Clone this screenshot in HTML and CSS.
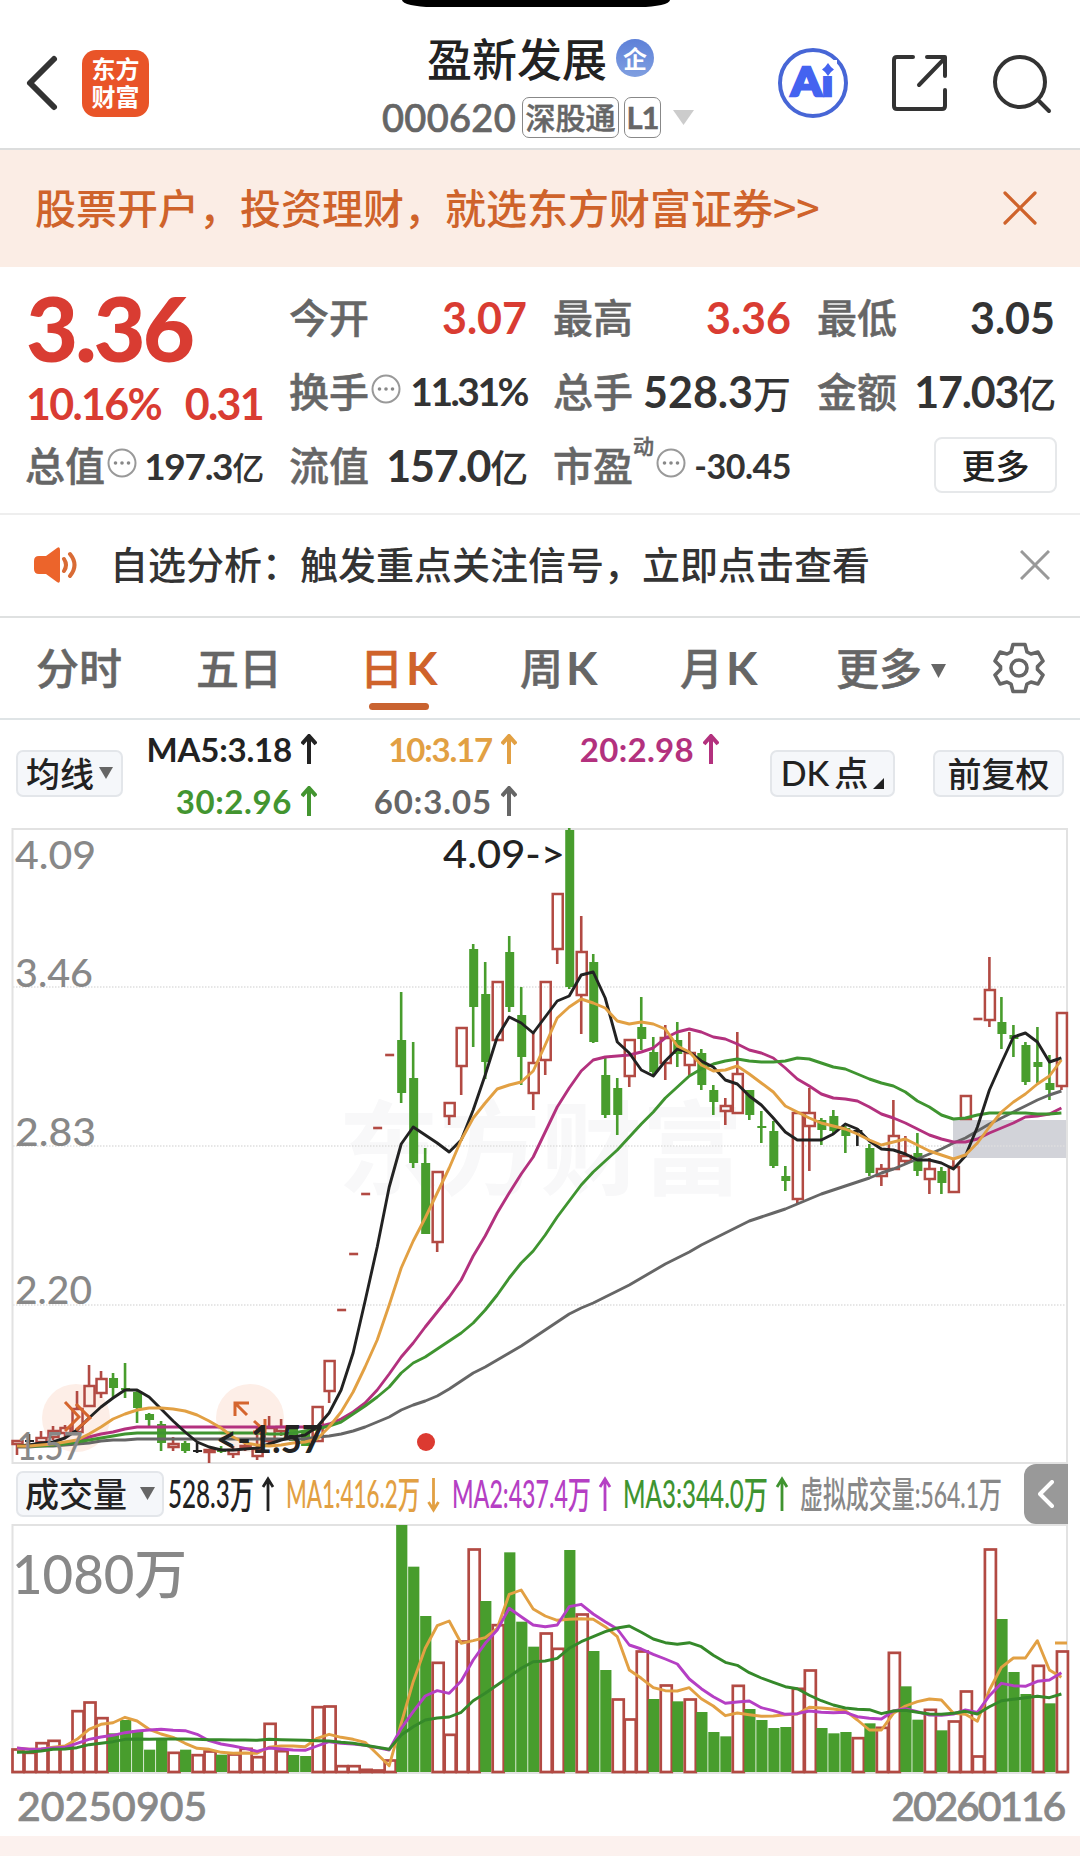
FILE: index.html
```html
<!DOCTYPE html>
<html lang="zh-CN">
<head>
<meta charset="UTF-8">
<meta name="viewport" content="width=device-width, initial-scale=1.0">
<title>盈新发展 000620</title>
<link rel="stylesheet" href="styles.css">
</head>
<body>

  <svg class="defs" width="0" height="0">
    <symbol id="up" viewBox="0 0 16 30"><path d="M8 30V2M1 10L8 2L15 10" fill="none" stroke="currentColor" stroke-width="4"/></symbol>
    <symbol id="dots" viewBox="0 0 30 30">
      <circle cx="15" cy="15" r="13.500" fill="none" stroke="#999" stroke-width="2"/>
      <circle cx="8.500" cy="15" r="1.800" fill="#888"/><circle cx="15" cy="15" r="1.800" fill="#888"/><circle cx="21.500" cy="15" r="1.800" fill="#888"/>
    </symbol>
  </svg>

  <div class="notch"></div>

  <header class="header">
    <svg class="back" width="34" height="58" viewBox="0 0 34 58"><path d="M29 5L5 29L29 53" fill="none" stroke="#333" stroke-width="6" stroke-linecap="round" stroke-linejoin="round"/></svg>
    <div class="logo">东方<br>财富</div>
    <div class="stock">
      <div class="stock-name">盈新发展<span class="badge">企</span></div>
      <div class="stock-code">
        <span class="code">000620</span>
        <span class="tag">深股通</span>
        <span class="tag tag-l1">L1</span>
        <svg width="21" height="15" viewBox="0 0 21 15"><path d="M0 0H21L10.500 15Z" fill="#ccc"/></svg>
      </div>
    </div>
    <div class="actions">
      <svg width="70" height="70" viewBox="0 0 70 70">
        <circle cx="35" cy="35" r="33" fill="#fff" stroke="#4766d6" stroke-width="4"/>
        <text class="ai-text" x="13" y="48" textLength="42" lengthAdjust="spacingAndGlyphs">Ai</text>
        <rect x="42" y="12" width="17" height="16" fill="#fff"/>
        <path d="M50 15L53 19L56 21.500L53 24L50 28L47 24L44 21.500L47 19Z" fill="#4463f0"/>
      </svg>
      <svg width="58" height="58" viewBox="0 0 58 58" fill="none" stroke="#333" stroke-width="4" stroke-linecap="round" stroke-linejoin="round">
        <path d="M22 3H6Q3 3 3 6V52Q3 55 6 55H51Q54 55 54 52V36"/>
        <path d="M36 3H54V22M54 4L28 31"/>
      </svg>
      <svg width="60" height="60" viewBox="0 0 60 60" fill="none" stroke="#333" stroke-width="4" stroke-linecap="round">
        <circle cx="28" cy="28" r="25"/><path d="M46 46L57 57"/>
      </svg>
    </div>
  </header>

  <div class="banner">
    <span>股票开户，投资理财，就选东方财富证券&gt;&gt;</span>
    <svg width="34" height="34" viewBox="0 0 34 34"><path d="M2 2L32 32M32 2L2 32" stroke="#cf632b" stroke-width="3.200" stroke-linecap="round"/></svg>
  </div>

  <section class="quote">
    <div class="price up-color">
      <div class="price-now">3.36</div>
      <div class="price-change"><span>10.16%</span><span>0.31</span></div>
    </div>
    <div class="cell"><span class="label">今开</span><b class="up-color">3.07</b></div>
    <div class="cell"><span class="label">最高</span><b class="up-color">3.36</b></div>
    <div class="cell"><span class="label">最低</span><b>3.05</b></div>
    <div class="cell"><span class="label">换手<svg class="info"><use href="#dots"/></svg></span><b class="mid">11.31%</b></div>
    <div class="cell"><span class="label">总手</span><b>528.3<i>万</i></b></div>
    <div class="cell"><span class="label">金额</span><b class="tight">17.03<i>亿</i></b></div>
    <div class="cell"><span class="label">总值<svg class="info"><use href="#dots"/></svg></span><b class="small">197.3<i>亿</i></b></div>
    <div class="cell"><span class="label">流值</span><b class="tight">157.0<i>亿</i></b></div>
    <div class="cell"><span class="label">市盈<sup>动</sup><svg class="info"><use href="#dots"/></svg></span><b class="tiny">-30.45</b></div>
    <div class="cell cell-more"><button class="more">更多</button></div>
  </section>

  <div class="notice">
    <svg width="44" height="38" viewBox="0 0 44 38">
      <path d="M5 10H12L23 2Q26 0 26 4V34Q26 38 23 36L12 28H5Q0 28 0 23V15Q0 10 5 10Z" fill="#ec642b"/>
      <path d="M30 13Q34 19 30 25M36 8Q45 19 36 30" fill="none" stroke="#d96b35" stroke-width="4" stroke-linecap="round"/>
    </svg>
    <span>自选分析：触发重点关注信号，立即点击查看</span>
    <svg width="30" height="30" viewBox="0 0 30 30"><path d="M1 1L29 29M29 1L1 29" stroke="#999" stroke-width="3"/></svg>
  </div>

  <nav class="tabs">
    <span>分时</span>
    <span>五日</span>
    <span class="active">日<em>K</em></span>
    <span>周<em>K</em></span>
    <span>月<em>K</em></span>
    <span>更多<svg class="caret" width="15" height="14" viewBox="0 0 15 14"><path d="M0 0H15L7.500 14Z" fill="#666"/></svg></span>
    <svg width="52" height="52" viewBox="-26 -26 52 52" fill="none" stroke="#666" stroke-width="3.600" stroke-linejoin="round">
      <path d="M-6 -23.500H6L8 -16L12 -14L19 -16L24 -7L18.500 -1.500V1.500L24 7L19 16L12 14L8 16L6 23.500H-6L-8 16L-12 14L-19 16L-24 7L-18.500 1.500V-1.500L-24 -7L-19 -16L-12 -14L-8 -16Z"/>
      <circle r="8"/>
    </svg>
  </nav>

  <div class="ma-bar">
    <button class="chip">均线<svg width="14" height="12" viewBox="0 0 14 12"><path d="M0 0H14L7 12Z" fill="#666"/></svg></button>
    <div class="ma-values">
      <span class="ma5">MA5:3.18<svg class="arrow"><use href="#up"/></svg></span>
      <span class="ma10">10:3.17<svg class="arrow"><use href="#up"/></svg></span>
      <span class="ma20">20:2.98<svg class="arrow"><use href="#up"/></svg></span>
      <span class="ma30">30:2.96<svg class="arrow"><use href="#up"/></svg></span>
      <span class="ma60">60:3.05<svg class="arrow"><use href="#up"/></svg></span>
    </div>
    <button class="chip chip-dk">DK<span>点</span><svg width="11" height="11" viewBox="0 0 11 11"><path d="M11 0V11H0Z" fill="#222"/></svg></button>
    <button class="chip chip-fq">前复权</button>
  </div>

  <svg class="chart" id="priceChart" width="1080" height="636" viewBox="0 828 1080 636"></svg>

  <div class="vol-bar">
    <button class="chip">成交量<svg width="15" height="13" viewBox="0 0 15 13"><path d="M0 0H15L7.500 13Z" fill="#666"/></svg></button>
    <svg class="vol-values" width="845" height="60" viewBox="165 1464 845 60">
      <text x="168" y="1508" textLength="86" lengthAdjust="spacingAndGlyphs" fill="#222">528.3万</text>
      <text x="286" y="1508" textLength="134" lengthAdjust="spacingAndGlyphs" fill="#e2a043">MA1:416.2万</text>
      <text x="452" y="1508" textLength="139" lengthAdjust="spacingAndGlyphs" fill="#b53fc4">MA2:437.4万</text>
      <text x="623" y="1508" textLength="145" lengthAdjust="spacingAndGlyphs" fill="#3f9430">MA3:344.0万</text>
      <text class="virtual" x="800" y="1508" textLength="202" lengthAdjust="spacingAndGlyphs" fill="#888">虚拟成交量:564.1万</text>
      <g fill="none" stroke-width="2.800">
        <path d="M268 1511V1480M263 1487L268 1479L273 1487" stroke="#222"/>
        <path d="M433.500 1478V1510M428.500 1502L433.500 1510L438.500 1502" stroke="#e2a043"/>
        <path d="M605 1511V1480M600 1487L605 1479L610 1487" stroke="#b53fc4"/>
        <path d="M782 1511V1480M777 1487L782 1479L787 1487" stroke="#3f9430"/>
      </g>
    </svg>
    <button class="collapse"><svg width="16" height="28" viewBox="0 0 16 28"><path d="M14 2L2 14L14 26" fill="none" stroke="#fff" stroke-width="4" stroke-linecap="round" stroke-linejoin="round"/></svg></button>
  </div>

  <svg class="chart" id="volumeChart" width="1080" height="250" viewBox="0 1524 1080 250"></svg>

  <div class="dates"><span>20250905</span><span class="date-end">20260116</span></div>
  <div class="bottom-strip"></div>

  <script src="chart.js"></script>
</body>
</html>
```

FILE: styles.css
```css
body {
  margin: 0;
  width: 1080px;
  height: 1856px;
  overflow: hidden;
  background-color: #fff;
  color: #333;
  font-family: Lato, 'Noto Sans CJK SC', sans-serif;
  font-weight: 500;
}

svg {
  display: block;
  flex: none;
}

button {
  font: inherit;
  color: #222;
  padding: 0;
  margin: 0;
}

.defs {
  position: absolute;
}

.notch {
  position: absolute;
  top: 0;
  left: 402px;
  width: 268px;
  height: 7px;
  background-color: #000;
  border-radius: 0 0 30px 30px / 0 0 7px 7px;
}

/* header */
.header {
  box-sizing: border-box;
  height: 150px;
  border-bottom: 2px solid #dcdddd;
  display: grid;
  grid-template-columns: 57px 67px 1fr 275px;
  padding: 0 28px 0 25px;
}

.back {
  margin-top: 54px;
}

.logo {
  width: 67px;
  height: 67px;
  margin-top: 50px;
  border-radius: 14px;
  background-color: #e95428;
  color: #fff;
  font: 700 24px/28px 'Noto Sans CJK SC', sans-serif;
  text-align: center;
  padding-top: 4px;
  box-sizing: border-box;
}

.stock {
  padding-top: 33px;
  padding-left: 233px;
}

.stock-name {
  display: flex;
  align-items: center;
  height: 50px;
  margin-left: 45px;
  font: 500 45px/50px 'Noto Sans CJK SC', sans-serif;
  color: #222;
  white-space: nowrap;
}

.badge {
  width: 38px;
  height: 38px;
  margin-left: 9px;
  border-radius: 50%;
  background: linear-gradient(#5d80d8, #809fe0);
  color: #fff;
  font: 700 24px/37px 'Noto Sans CJK SC', sans-serif;
  text-align: center;
}

.stock-code {
  display: flex;
  align-items: center;
  height: 42px;
  margin-top: 13px;
  color: #666;
}

.code {
  font-size: 38px;
  width: 140px;
  flex: none;
  letter-spacing: 0.3px;
  -webkit-text-stroke: 0.7px #666;
}

.tag {
  box-sizing: border-box;
  flex: none;
  width: 97px;
  height: 41px;
  border: 1.5px solid #888;
  border-radius: 7px;
  font: 500 30px/36px 'Noto Sans CJK SC', sans-serif;
  text-align: center;
  -webkit-text-stroke: 0.5px #666;
}

.tag-l1 {
  width: 37px;
  margin: 0 12px 0 5px;
  font: 700 31px/38px Lato, sans-serif;
  letter-spacing: -1px;
}

.actions {
  display: flex;
  align-items: flex-start;
  justify-content: space-between;
  padding-top: 48px;
  padding-left: 1px;
}

.actions svg + svg {
  margin-top: 6px;
}

.ai-text {
  font: 900 39px Lato, sans-serif;
  fill: #4463f0;
  stroke: #4463f0;
  stroke-width: 2.5px;
}

/* ad banner */
.banner {
  height: 117px;
  box-sizing: border-box;
  display: flex;
  align-items: center;
  justify-content: space-between;
  padding: 0 43px 2px 35px;
  background-color: #fbede5;
  color: #cf632b;
  font: 500 41px/60px 'Noto Sans CJK SC', sans-serif;
}

.banner span {
  margin-top: -4px;
}

/* quote */
.quote {
  box-sizing: border-box;
  height: 248px;
  display: grid;
  grid-template-columns: repeat(4, 237px);
  grid-template-rows: repeat(3, 74px);
  column-gap: 27px;
  padding: 13px 0 0 26px;
  border-bottom: 2px solid #eee;
}

.up-color {
  color: #d93c32;
}

.price {
  grid-row: span 2;
}

.price-now {
  margin-top: -2px;
  font-size: 90px;
  font-weight: 900;
  line-height: 99px;
  letter-spacing: -3px;
}

.price-change {
  display: flex;
  justify-content: space-between;
  font-size: 43px;
  font-weight: 700;
  line-height: 54px;
  letter-spacing: -1.7px;
}

.cell {
  display: flex;
  align-items: center;
  justify-content: space-between;
  white-space: nowrap;
}

.cell b {
  font-size: 43px;
  font-weight: 700;
}

.cell i {
  font: 500 38px 'Noto Sans CJK SC', sans-serif;
  line-height: 1;
}

.cell .tight {
  letter-spacing: -1.2px;
}

.cell .mid {
  font-size: 39px;
  letter-spacing: -2.5px;
}

.cell .small {
  font-size: 37px;
  letter-spacing: -1.3px;
}

.cell .small i {
  font-size: 32px;
}

.cell .tiny {
  font-size: 34px;
  letter-spacing: -0.5px;
}

.label {
  display: flex;
  align-items: center;
  margin: -3px 0 0 -1px;
  font: 500 40px/60px 'Noto Sans CJK SC', sans-serif;
  color: #666;
  -webkit-text-stroke: 0.5px #666;
}

.label sup {
  font-size: 21px;
  line-height: 20px;
  align-self: flex-start;
  padding-top: 1px;
}

.info {
  width: 30px;
  height: 30px;
  margin-left: 2px;
  margin-top: -2px;
}

.cell-more {
  justify-content: flex-end;
}

.more {
  box-sizing: border-box;
  width: 123px;
  height: 56px;
  margin-right: -2px;
  border: 2px solid #e6e8ea;
  border-radius: 8px;
  background-color: #fff;
  font: 500 34px/48px 'Noto Sans CJK SC', sans-serif;
}

/* signal notice */
.notice {
  box-sizing: border-box;
  height: 103px;
  display: flex;
  align-items: center;
  padding: 0 30px 2px 34px;
  border-bottom: 2px solid #dfe1e1;
  font: 500 38px/60px 'Noto Sans CJK SC', sans-serif;
}

.notice span {
  flex: 1;
  margin-top: -3px;
  padding-left: 32px;
}

/* period tabs */
.tabs {
  box-sizing: border-box;
  height: 102px;
  display: grid;
  grid-template-columns: 160px 164px 160px 160px 156px 157px 52px;
  align-items: center;
  padding-left: 36px;
  border-bottom: 2px solid #dfe4e6;
  color: #666;
  font: 500 43px/96px 'Noto Sans CJK SC', sans-serif;
  -webkit-text-stroke: 0.5px;
}

.tabs span {
  height: 100px;
}

.tabs em {
  margin-left: 3px;
  font: 700 46px Lato, sans-serif;
  -webkit-text-stroke: 0;
}

.tabs .active {
  position: relative;
  color: #cf632b;
}

.tabs .active::after {
  content: '';
  position: absolute;
  left: 9px;
  bottom: 8px;
  width: 60px;
  height: 7px;
  border-radius: 4px;
  background-color: #c96330;
}

.tabs .caret {
  display: inline-block;
  margin-left: 9px;
  vertical-align: 7px;
}

/* moving averages */
.ma-bar {
  height: 108px;
  display: flex;
  padding-left: 16px;
}

.chip {
  box-sizing: border-box;
  display: flex;
  align-items: center;
  justify-content: center;
  flex: none;
  width: 107px;
  height: 47px;
  margin-top: 30px;
  border: 2px solid #e3e6ea;
  border-radius: 7px;
  background-color: #f5f7fa;
  font: 500 34px/40px 'Noto Sans CJK SC', sans-serif;
  padding-bottom: 2px;
}

.chip svg {
  margin-left: 5px;
}

.ma-values {
  display: grid;
  grid-template-columns: 194px 200px 202px;
  grid-template-rows: 52px 52px;
  margin-top: 3px;
  width: 647px;
  font-size: 33px;
  font-weight: 700;
}

.ma-values span {
  display: flex;
  align-items: center;
  justify-content: flex-end;
}

.arrow {
  width: 16px;
  height: 30px;
  margin-left: 9px;
}

.ma5 { color: #222; letter-spacing: -0.2px; }
.ma10 { color: #e2a043; letter-spacing: -1.2px; }
.ma20 { color: #b3317e; letter-spacing: 0.3px; }
.ma30 { color: #439530; letter-spacing: 0.6px; }
.ma60 { color: #666; letter-spacing: 0.9px; }

.chip-dk {
  width: 125px;
  font-family: Lato, 'Noto Sans CJK SC', sans-serif;
}

.chip-dk span {
  margin-left: 5px;
}

.chip-dk svg {
  align-self: flex-end;
  margin-bottom: 4px;
}

.chip-fq {
  width: 131px;
  margin-left: 38px;
}

/* charts */
.axis {
  fill: #888;
}

.mark {
  fill: #222;
}

.axis, .mark {
  stroke: currentColor;
  stroke-width: 0;
}

.watermark {
  font: 700 102px 'Noto Sans CJK SC', sans-serif;
  fill: #f8f8f9;
}

.vol-bar {
  height: 60px;
  display: flex;
  align-items: center;
  padding-left: 16px;
}

.vol-bar .chip {
  width: 148px;
  height: 46px;
  margin: 0 1px 0 0;
}

.vol-bar .chip svg {
  margin-left: 13px;
}

.vol-values {
  font-size: 38px;
  font-weight: 500;
}

.virtual {
  font-size: 36px;
}

.collapse {
  width: 44px;
  height: 60px;
  margin-left: 14px;
  border: 0;
  border-radius: 12px 0 0 12px;
  background-color: #999;
  display: flex;
  align-items: center;
  justify-content: center;
}

.dates {
  height: 62px;
  display: flex;
  align-items: center;
  justify-content: space-between;
  padding: 0 16px 0 17px;
  color: #888;
  font-size: 41px;
  -webkit-text-stroke: 0.7px #888;
}

.date-end {
  letter-spacing: -2.2px;
}

.bottom-strip {
  height: 20px;
  background-color: #fcf1ee;
}
```

FILE: chart.js
```js
const RED = '#b24a43';
const GREEN = '#489d2d';
const STEP = 12.005;
const LEFT = 17;
const cx = i => LEFT + STEP * i;

// [kind, high, body top, body bottom, low]; r = rise, g = fall, k = flat
const candles = [
  ['r',1440,1440,1444,1455], ['k',1434,1440,1442,1444], ['r',1431,1437,1442,1442], ['r',1426,1430,1437,1440],
  ['r',1425,1427,1433,1437], ['r',1391,1408,1432,1434], ['r',1365,1385,1406,1406], ['r',1371,1378,1393,1398],
  ['g',1373,1378,1388,1397], ['g',1363,1388,1390,1398], ['g',1390,1392,1408,1423], ['g',1413,1414,1420,1426],
  ['g',1421,1424,1443,1451], ['r',1437,1443,1447,1451], ['g',1441,1443,1451,1453], ['k',1443,1450,1452,1453],
  ['r',1449,1449,1452,1463], ['g',1446,1449,1452,1453], ['r',1446,1449,1454,1458], ['r',1442,1445,1448,1451],
  ['r',1428,1448,1456,1460], ['r',1416,1427,1441,1447], ['r',1419,1426,1431,1436], ['g',1426,1426,1441,1441],
  ['g',1431,1431,1446,1446], ['r',1406,1406,1441,1441], ['r',1360,1360,1391,1403], ['-',0,1310],
  ['-',0,1254], ['-',0,1194], ['-',0,1128], ['-',0,1055],
  ['g',992,1040,1093,1103], ['g',1042,1078,1163,1168], ['g',1148,1163,1234,1234], ['r',1171,1171,1242,1252],
  ['r',1102,1102,1116,1125], ['r',1027,1027,1066,1095], ['g',944,949,1007,1047], ['g',962,994,1062,1079],
  ['r',981,981,1040,1040], ['g',936,952,1007,1012], ['g',987,1015,1057,1085], ['r',1033,1062,1093,1110],
  ['r',981,981,1060,1075], ['r',893,893,949,964], ['g',828,830,987,989], ['r',916,951,995,1034],
  ['g',954,962,1042,1043], ['g',1057,1075,1115,1118], ['g',1078,1088,1115,1135], ['r',1039,1039,1076,1087],
  ['g',997,1027,1039,1050], ['g',1037,1052,1072,1076], ['r',1025,1037,1063,1080], ['g',1022,1040,1054,1067],
  ['r',1032,1052,1065,1075], ['g',1049,1053,1085,1090], ['g',1085,1090,1102,1115], ['r',1098,1105,1111,1125],
  ['r',1032,1073,1113,1113], ['g',1090,1090,1115,1120], ['g',1111,1126,1128,1143], ['g',1121,1131,1166,1168],
  ['g',1166,1176,1181,1191], ['r',1112,1112,1199,1203], ['r',1088,1112,1126,1171], ['g',1118,1120,1130,1145],
  ['g',1110,1116,1131,1134], ['g',1126,1128,1136,1153], ['k',1129,1130,1132,1146], ['g',1144,1148,1173,1176],
  ['r',1164,1168,1176,1186], ['r',1100,1135,1169,1169], ['r',1136,1155,1161,1164], ['g',1133,1153,1171,1176],
  ['r',1158,1168,1179,1194], ['g',1167,1171,1183,1194], ['r',1160,1166,1192,1193], ['r',1095,1095,1119,1119],
  ['-',0,1019], ['r',957,989,1020,1027], ['g',997,1022,1034,1049], ['g',1025,1035,1039,1057],
  ['g',1042,1045,1082,1085], ['g',1027,1062,1067,1083], ['g',1055,1083,1090,1100], ['r',1012,1012,1086,1090]
];

const priceLines = [
  { color: '#666', y: [1447,1447,1446,1446,1445,1444,1443,1441,1440,1440,1439,1439,1439,1439,1439,1439,1439,1439,1439,1439,1439,1439,1439,1439,1439,1437,1436,1434,1431,1427,1422,1417,1410,1405,1401,1396,1389,1381,1373,1367,1360,1353,1346,1338,1330,1322,1314,1308,1303,1297,1291,1285,1278,1271,1264,1258,1252,1245,1239,1233,1227,1221,1217,1213,1209,1204,1199,1194,1190,1186,1182,1178,1173,1169,1164,1159,1154,1149,1143,1138,1131,1124,1118,1112,1106,1100,1095,1091] },
  { color: '#b3317e', y: [1446,1446,1445,1444,1443,1441,1437,1434,1432,1429,1427,1427,1427,1427,1427,1427,1427,1427,1427,1427,1427,1427,1427,1427,1427,1427,1424,1419,1412,1403,1390,1374,1357,1343,1327,1312,1297,1280,1256,1236,1213,1193,1174,1157,1132,1107,1088,1071,1060,1057,1056,1055,1052,1048,1038,1032,1029,1032,1037,1039,1044,1050,1053,1058,1068,1079,1086,1094,1098,1099,1101,1107,1114,1118,1123,1129,1135,1139,1142,1142,1139,1133,1128,1123,1117,1116,1114,1108] },
  { color: '#3f9430', y: [1446,1446,1446,1445,1444,1442,1440,1438,1436,1434,1433,1433,1433,1433,1433,1433,1433,1433,1433,1433,1433,1434,1434,1433,1431,1429,1426,1422,1414,1406,1397,1387,1373,1363,1357,1349,1341,1333,1323,1310,1295,1278,1263,1251,1235,1217,1201,1185,1172,1161,1150,1137,1124,1112,1098,1087,1076,1069,1064,1061,1059,1061,1062,1062,1061,1058,1059,1063,1067,1069,1074,1079,1083,1086,1092,1101,1107,1115,1119,1118,1115,1113,1113,1113,1113,1114,1114,1113] },
  { color: '#222', y: [1446,1445,1443,1442,1438,1430,1418,1407,1398,1390,1390,1397,1409,1421,1432,1442,1447,1450,1450,1449,1448,1444,1440,1437,1435,1427,1413,1390,1353,1301,1247,1187,1144,1127,1135,1143,1152,1140,1110,1075,1037,1017,1023,1033,1017,1001,996,975,972,998,1042,1053,1070,1076,1061,1049,1052,1061,1067,1080,1084,1096,1105,1118,1132,1140,1140,1140,1134,1124,1129,1141,1149,1150,1154,1160,1160,1163,1169,1156,1127,1090,1063,1037,1033,1042,1062,1058] },
  { color: '#e2a043', y: [1446,1446,1445,1444,1442,1440,1434,1427,1419,1414,1410,1408,1408,1409,1411,1415,1421,1428,1437,1443,1445,1446,1445,1443,1442,1439,1427,1412,1392,1367,1340,1305,1268,1241,1218,1193,1168,1140,1118,1103,1089,1085,1082,1071,1045,1018,1007,999,1003,1008,1021,1024,1022,1024,1029,1046,1052,1065,1071,1070,1066,1074,1083,1092,1106,1112,1118,1123,1126,1129,1134,1140,1145,1142,1139,1145,1151,1155,1159,1155,1143,1127,1112,1102,1094,1084,1076,1060] }
];

// volume scale: 195 is the top edge of the panel, 937 the baseline
const vy = v => 1460 + v / 3;
const volumes = 'r867 r877 r848 r841 r862 r752 r726 r773 g820 g780 g810 g869 g835 r877 g869 r884 r873 g884 r882 r865 r890 r790 r872 g885 g888 r740 r738 r917 r917 r928 r930 r900 g195 g320 g468 r607 r823 r543 r267 g423 r494 g277 g485 g560 r519 r565 g270 r462 g573 g630 r717 r777 r573 g717 r675 g724 r717 g756 g816 g829 r676 g747 g780 g804 g801 r685 r630 g804 g820 g816 r833 g790 r802 r577 g679 g779 r748 g811 r783 r693 r888 r267 g477 g636 g702 r616 g730 r573'.split(' ');

const volumeLines = [
  { color: '#e2a043', y: [865,868,868,862,858,838,808,793,788,772,783,808,822,832,850,865,868,877,880,879,880,862,858,858,860,835,823,832,838,847,882,917,790,665,565,497,483,550,542,533,505,403,390,447,468,481,478,476,478,500,530,630,655,683,692,693,683,716,738,767,759,764,769,768,764,762,742,744,747,752,780,810,810,760,738,725,717,720,760,763,784,690,622,594,594,542,630,652] },
  { color: '#b53fc4', y: [864,868,867,864,862,850,838,831,826,818,813,810,808,811,812,823,842,852,858,865,874,864,867,870,871,858,845,850,852,856,863,870,805,755,708,692,700,663,600,550,510,445,470,495,500,495,440,433,462,485,507,555,567,583,597,612,657,686,710,730,726,723,743,752,763,761,753,757,758,757,770,775,777,753,746,755,765,766,762,750,757,707,670,677,679,664,660,638] },
  { color: '#35892a', y: [877,876,873,868,867,863,854,850,845,838,837,838,837,837,837,838,839,839,840,840,841,838,839,840,841,842,843,847,850,856,862,868,825,800,780,774,771,757,722,700,675,650,625,605,603,595,565,545,530,515,504,498,517,537,548,553,548,560,586,607,616,638,654,667,680,686,706,722,735,744,748,749,761,753,751,757,762,763,760,754,762,740,722,718,713,709,713,702] }
];

function line(l, fy) {
  const pts = l.y.map((v, i) => cx(i).toFixed(1) + ',' + fy(v).toFixed(1)).join(' ');
  return `<polyline points="${pts}" fill="none" stroke="${l.color}" stroke-width="2.9" stroke-linejoin="round"/>`;
}

function text(cls, x, y, w, size, str, weight) {
  return `<text class="${cls}" x="${x}" y="${y}" textLength="${w}" lengthAdjust="spacingAndGlyphs" font-size="${size}" font-weight="${weight || 500}">${str}</text>`;
}

function candle(c, i) {
  const x = cx(i);
  const [kind, high, top, bottom, low] = c;
  if (kind === '-') {
    return `<path d="M${x - 4} ${top}h9" stroke="${RED}" stroke-width="2.6"/>`;
  }
  const color = kind === 'r' ? RED : kind === 'g' ? GREEN : '#222';
  let s = `<path d="M${x} ${high}V${top}M${x} ${bottom}V${low}" stroke="${color}" stroke-width="2.6"/>`;
  if (kind === 'r') {
    s += `<rect x="${x - 4.5}" y="${top + 1}" width="10" height="${Math.max(bottom - top - 1, 2)}" fill="none" stroke="${color}" stroke-width="2.5"/>`;
  } else {
    s += `<rect x="${x - 4}" y="${top}" width="9" height="${bottom - top}" fill="${color}"/>`;
  }
  return s;
}

function drawPrice() {
  let s = text('watermark', 338, 1187, 405, 102, '东方财富', 700);
  s += '<rect x="953" y="1120" width="114" height="38" fill="#d2d3d9"/>';
  [987, 1146, 1305].forEach(y => {
    s += `<path d="M13 ${y}H1067" stroke="#dedede" stroke-width="1.5" stroke-dasharray="1.5 1.5"/>`;
  });
  s += '<path d="M12.500 1463V829H1067V1463Z" fill="none" stroke="#e2e2e2" stroke-width="2"/>';
  s += '<circle cx="76" cy="1418" r="34" fill="#fdeee7"/><circle cx="250" cy="1418" r="34" fill="#fdeee7"/>';
  s += candles.map(candle).join('');
  s += priceLines.map(l => line(l, v => v)).join('');
  s += '<g fill="none" stroke="#d5652e" stroke-width="3"><path d="M65 1402L79 1417L65 1431M76 1404L90 1418L76 1430"/>';
  s += '<path d="M235 1416V1403H249M236 1404L247 1415M254 1421L265 1431M265 1419V1432H253"/></g>';
  s += text('axis', 15, 869, 81, 38, '4.09');
  s += text('axis', 15, 987, 78, 38, '3.46');
  s += text('axis', 15, 1146, 81, 38, '2.83');
  s += text('axis', 15, 1304, 77, 38, '2.20');
  s += text('axis', 17, 1460, 66, 38, '1.57');
  s += text('mark', 443, 868, 122, 39, '4.09-&gt;');
  s += text('mark', 216, 1453, 107, 38, '&lt;-1.57', 700);
  s += '<circle cx="426" cy="1442" r="9" fill="#dc3a31"/>';
  document.getElementById('priceChart').innerHTML = s;
}

function drawVolume() {
  let s = '<path d="M12.500 1773V1525H1067V1773Z" fill="none" stroke="#e2e2e2" stroke-width="2"/>';
  s += text('axis', 12, 1594, 175, 54, '1080万');
  volumes.forEach((v, i) => {
    const x = cx(i);
    const top = vy(+v.slice(1));
    if (v[0] === 'r') {
      s += `<rect x="${x - 4.5}" y="${top + 0.5}" width="11" height="${1771.5 - top}" fill="#fff" stroke="${RED}" stroke-width="2.7"/>`;
    } else {
      s += `<rect x="${x - 5}" y="${top}" width="11.2" height="${1772 - top}" fill="${GREEN}"/>`;
    }
  });
  s += '<path d="M1055 1643H1067" stroke="#e2a043" stroke-width="3"/>';
  s += volumeLines.map(l => line(l, vy)).join('');
  document.getElementById('volumeChart').innerHTML = s;
}

drawPrice();
drawVolume();
```
